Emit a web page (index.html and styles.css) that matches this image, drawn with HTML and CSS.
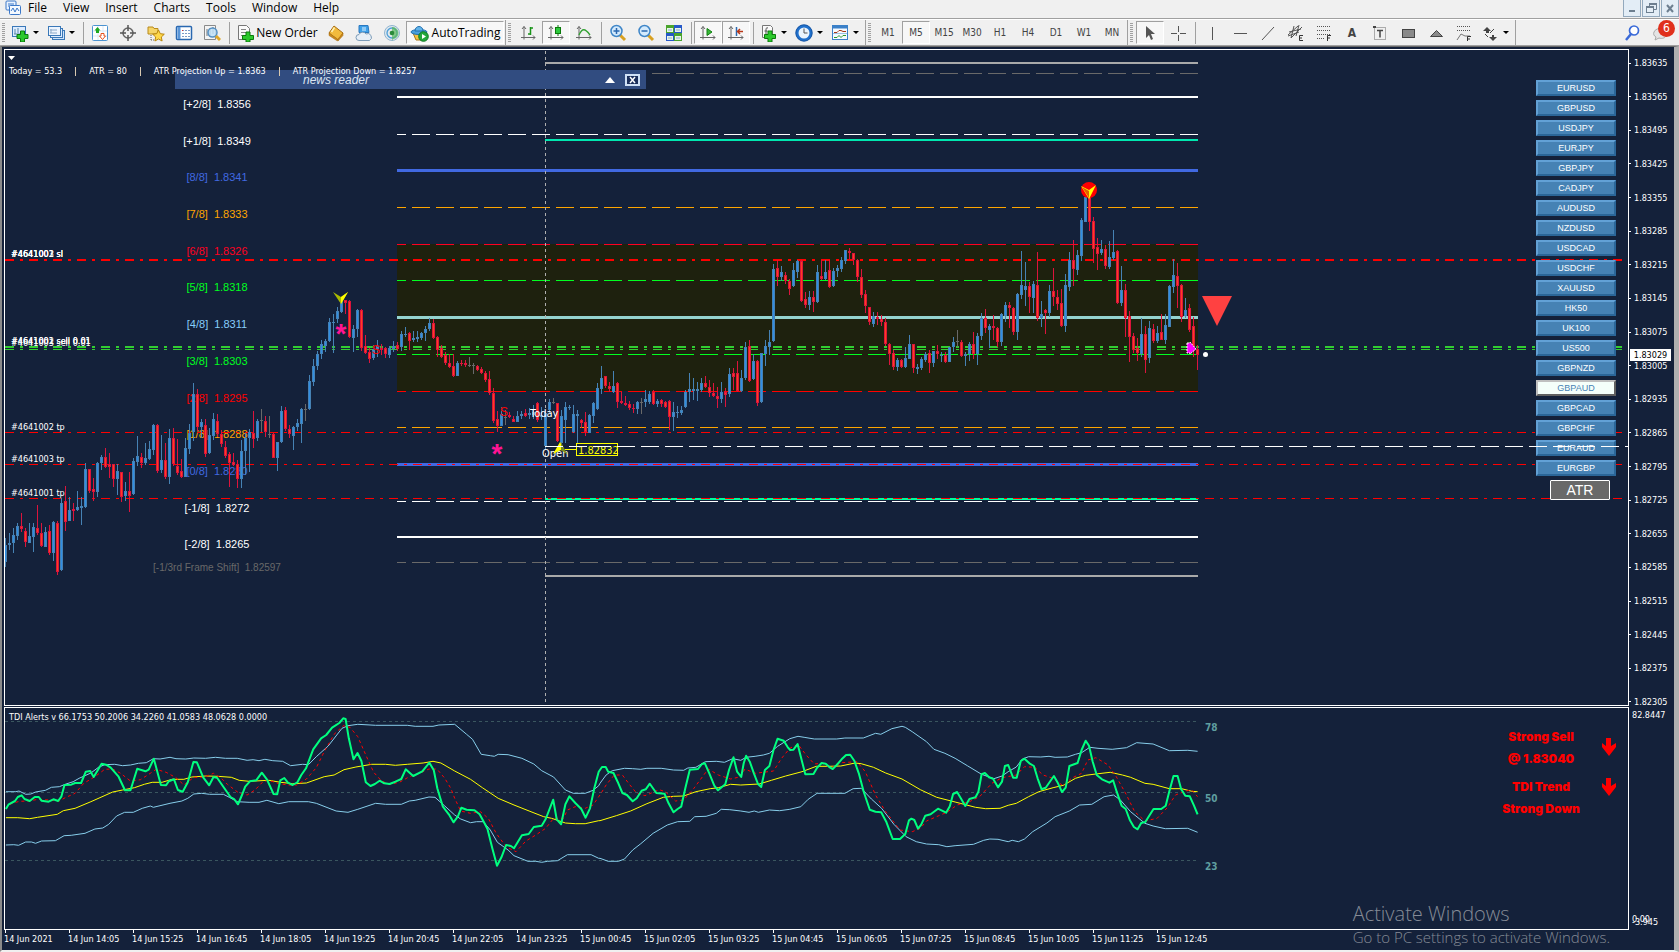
FILE: index.html
```html
<!DOCTYPE html>
<html lang="en">
<head>
    <meta charset="UTF-8">
    <meta name="viewport" content="width=device-width, initial-scale=1.0">
    <title>GBPAUD,M5</title>
    <link rel="stylesheet" href="styles.css">
</head>
<body>
    <!-- Menu -->
    <header class="menubar">
        <svg class="app-icon" width="16" height="15" viewBox="0 0 16 15"><rect x="1" y="1" width="10" height="9" rx="1" fill="#e8f2ff" stroke="#3c78c8"/><path d="M3 4h6M3 6h3" stroke="#3c78c8"/><rect x="4.500" y="5.500" width="11" height="9" rx="1" fill="#f4f9ff" stroke="#3c78c8"/><path d="M6 11l2-3 2 4 2-4 2 3" fill="none" stroke="#3c78c8"/></svg>
        <nav class="menu">
            <button>File</button>
            <button>View</button>
            <button>Insert</button>
            <button>Charts</button>
            <button>Tools</button>
            <button>Window</button>
            <button>Help</button>
        </nav>
        <div class="window-buttons">
            <button aria-label="Minimize"><svg width="16" height="14"><path d="M5 10h6" stroke="#6d7f90" stroke-width="2"/></svg></button>
            <button aria-label="Restore"><svg width="16" height="14"><path d="M6.500 5V2.500h7v6H11" fill="none" stroke="#6d7f90"/><path d="M6 3h8" stroke="#6d7f90" stroke-width="2"/><rect x="3.500" y="5.500" width="7" height="6" fill="#e6eff7" stroke="#6d7f90"/><path d="M3 6h8" stroke="#6d7f90" stroke-width="2"/></svg></button>
            <button aria-label="Close"><svg width="16" height="14"><path d="M5 4l6 7M11 4l-6 7" stroke="#6d7f90" stroke-width="2"/></svg></button>
        </div>
    </header>

    <!-- Toolbars -->
    <div class="toolbar">
        <div class="group">
            <span class="grip"></span>
            <button class="tool drop" aria-label="New chart"><svg width="18" height="18"><rect x="1.500" y="2.500" width="13" height="10" fill="#dcecff" stroke="#3a78b8"/><path d="M4 5v5M7 4v5M3 10h8" stroke="#5a88a8"/><path d="M9.500 7h4v3.500H17v4h-3.500V18h-4v-3.500H6v-4h3.500z" fill="#2cc82c" stroke="#0b7a0b"/></svg></button>
            <button class="tool drop" aria-label="Profiles"><svg width="18" height="18"><rect x="5.500" y="6.500" width="12" height="9" fill="#cfe3fa" stroke="#3a78b8"/><rect x="3.500" y="4.500" width="12" height="9" fill="#dcecff" stroke="#3a78b8"/><rect x="1.500" y="2.500" width="12" height="9" fill="#edf5ff" stroke="#3a78b8"/><path d="M4 5v4M3 9h7M3 6h7" stroke="#8aa8c8"/></svg></button>
            <span class="sep"></span>
            <button class="tool" aria-label="Market Watch"><svg width="18" height="18"><rect x="1.500" y="1.500" width="15" height="15" rx="1" fill="#fff" stroke="#4b93d1"/><path d="M2 7h14M2 12h14M7 2v14M12 2v14" stroke="#dbe9f5"/><path d="M6.500 3l3 3.500H8v2.500H5V6.500H3.500z" fill="#1fa81f"/><path d="M11.500 15.500l-3-3.500H10V9.500h3V12h1.500z" fill="#fff" stroke="#e8531f"/></svg></button>
            <button class="tool" aria-label="Data Window"><svg width="18" height="18"><circle cx="9" cy="9" r="5" fill="none" stroke="#666" stroke-width="1.500"/><path d="M9 1v6M9 11v6M1 9h6M11 9h6" stroke="#555" stroke-width="1.500"/></svg></button>
            <button class="tool" aria-label="Navigator"><svg width="18" height="18"><path d="M1 3h5l1 1.500h4V10H1z" fill="#f6d568" stroke="#b88a1c"/><path d="M4 11v6M4 16h4" stroke="#666" stroke-dasharray="1 1"/><path d="M11.500 6l1.800 3.700 4 .5-3 2.800.8 4-3.600-2-3.600 2 .8-4-3-2.800 4-.5z" fill="#ffd84a" stroke="#b8860b"/></svg></button>
            <button class="tool" aria-label="Terminal"><svg width="18" height="18"><rect x="1.500" y="2.500" width="15" height="13" rx="1" fill="#fff" stroke="#2a68b0" stroke-width="1.500"/><path d="M4 3v12" stroke="#5a96d8" stroke-width="3"/><path d="M7 6.500h8M7 9.500h8M7 12.500h8" stroke="#7a9cc8" stroke-dasharray="2 1"/><path d="M7 6.500h1" stroke="#e03030"/></svg></button>
            <button class="tool" aria-label="Strategy Tester"><svg width="18" height="18"><path d="M1.500 1.500h11v14h-11z" fill="#f4f4f4" stroke="#8a8a8a"/><path d="M4 12V5M7 13V4M10 10V3" stroke="#777"/><circle cx="9.500" cy="8.500" r="4.500" fill="#bfe0f8" fill-opacity=".85" stroke="#5591c4" stroke-width="1.500"/><path d="M13 12l4 4" stroke="#e0a828" stroke-width="3"/></svg></button>
            <span class="sep"></span>
            <button class="tool wide"><svg width="18" height="18"><path d="M2.500 1.500h8l3 3v11h-11z" fill="#fafafa" stroke="#777"/><path d="M5 5.500h5M5 8.500h6M5 11.500h3" stroke="#888"/><path d="M10 8h4v3.500h3.500v4H14V18h-4v-2.500H6.500v-4H10z" fill="#2cc82c" stroke="#0b7a0b"/></svg>New Order</button>
            <button class="tool" aria-label="MetaEditor"><svg width="18" height="18"><path d="M2 9l5-7 9 7-5 7z" fill="#f2bb3d" stroke="#a86d12"/><path d="M2 9v2.500l8.500 5.500V15zM16 9v2.500l-5 5.500v-2z" fill="#c98a1e" stroke="#a86d12" stroke-width=".5"/><path d="M4.500 8l3-4.500" stroke="#fff2b8" stroke-width="1.500"/></svg></button>
            <button class="tool" aria-label="Cloud"><svg width="18" height="18"><path d="M4 1.500h9l1 7H4z" fill="#3ea0e8" stroke="#2a78c0"/><path d="M7 4h4M7 6h4" stroke="#dff1ff"/><path d="M4 16.500a3 3 0 0 1 0-6 4 4 0 0 1 7-.5 3.300 3.300 0 0 1 3.500 6.500z" fill="#e6eef6" stroke="#7d9cb8"/></svg></button>
            <button class="tool" aria-label="Signals"><svg width="18" height="18"><circle cx="9" cy="9" r="7.500" fill="#e2e8ee" stroke="#8fb4d0"/><circle cx="9" cy="9" r="5" fill="none" stroke="#4c9fd8" stroke-width="1.300"/><path d="M9 3a6 6 0 0 1 1 12l-1 2z" fill="#58b858" fill-opacity=".7"/><circle cx="9" cy="9" r="2.300" fill="#2a8a3a"/></svg></button>
            <button class="tool auto pressed"><svg width="20" height="18"><path d="M3 9h12l-2 7H6z" fill="#f5c242" stroke="#a87618"/><ellipse cx="9" cy="8" rx="8" ry="2.500" fill="#4aa0dc" stroke="#2070b0"/><path d="M5 7c0-6 8-6 8 0z" fill="#62b4ea" stroke="#2070b0"/><circle cx="13.500" cy="12.500" r="4.800" fill="#22a83c" stroke="#0e7a22"/><path d="M12 10v5l4-2.500z" fill="#fff"/></svg>AutoTrading</button>
        </div>
        <div class="group">
            <span class="grip"></span>
            <button class="tool" aria-label="Bar Chart"><svg width="18" height="18"><path d="M5 2.500v13M3 5l2-2.500L7 5M2 13.500h14M14 11.500l2 2-2 2" fill="none" stroke="#666"/><path d="M11.500 3v8M9 10h2M12 4h2" stroke="#189418" stroke-width="1.500"/></svg></button>
            <button class="tool pressed" aria-label="Candlesticks"><svg width="18" height="18"><path d="M4 2.500v13M2 5l2-2.500L6 5M1 13.500h15M14 11.500l2 2-2 2" fill="none" stroke="#666"/><path d="M11 1v11" stroke="#0b7a0b"/><rect x="8.500" y="3.500" width="5" height="6" fill="#2cc83c" stroke="#0b7a0b"/></svg></button>
            <button class="tool" aria-label="Line Chart"><svg width="18" height="18"><path d="M4 2.500v13M2 5l2-2.500L6 5M1 13.500h15M14 11.500l2 2-2 2" fill="none" stroke="#666"/><path d="M4 11c3-7 6-7 11 0" fill="none" stroke="#30a030" stroke-width="1.300"/></svg></button>
            <span class="sep"></span>
            <button class="tool" aria-label="Zoom In"><svg width="18" height="18"><path d="M11 11l5 5" stroke="#d8a020" stroke-width="3"/><circle cx="7.500" cy="7" r="5.500" fill="#d4eafc" stroke="#3f86c8" stroke-width="1.500"/><path d="M4.500 7h6M7.500 4v6" stroke="#2a68b0" stroke-width="1.500"/></svg></button>
            <button class="tool" aria-label="Zoom Out"><svg width="18" height="18"><path d="M11 11l5 5" stroke="#d8a020" stroke-width="3"/><circle cx="7.500" cy="7" r="5.500" fill="#d4eafc" stroke="#3f86c8" stroke-width="1.500"/><path d="M4.500 7h6" stroke="#2a68b0" stroke-width="1.500"/></svg></button>
            <button class="tool" aria-label="Tile Windows"><svg width="18" height="18"><path fill="#49a42c" d="M1 1h8v8H1zM9 9h8v8H9z"/><path fill="#2558c8" d="M9 1h8v8H9zM1 9h8v8H1z"/><path fill="#e8f4e8" d="M2 4h6v4H2zM10 4h6v4h-6zM2 12h6v4H2zM10 12h6v4h-6z"/><path d="M3 6h4M11 6h4M3 14h4M11 14h4" stroke="#8ab0d0"/></svg></button>
            <span class="sep"></span>
            <button class="tool pressed" aria-label="Auto Scroll"><svg width="18" height="18"><path d="M4 2.500v13M2 5l2-2.500L6 5M1 13.500h15M14 11.500l2 2-2 2" fill="none" stroke="#666"/><path d="M8 4.500v7l5-3.500z" fill="#38b838" stroke="#128012"/></svg></button>
            <button class="tool pressed" aria-label="Chart Shift"><svg width="18" height="18"><path d="M4 2.500v13M2 5l2-2.500L6 5M1 13.500h15M14 11.500l2 2-2 2" fill="none" stroke="#666"/><path d="M9.500 3v9" stroke="#2a68b0" stroke-width="1.500"/><path d="M16 7.500h-5M13 5l-2.500 2.500L13 10" fill="none" stroke="#b83818" stroke-width="1.500"/></svg></button>
            <span class="sep"></span>
            <button class="tool drop" aria-label="Indicators"><svg width="18" height="18"><path d="M3.500 1.500h8l2 2v10h-10z" fill="#fafafa" stroke="#777"/><path d="M9 4c-2-1-2 1-2 2v5M5.500 7h3" fill="none" stroke="#555"/><path d="M9 7h4v3.500h3.500v4H13V18H9v-3.500H5.500v-4H9z" fill="#2cc82c" stroke="#0b7a0b"/></svg></button>
            <button class="tool drop" aria-label="Periods"><svg width="18" height="18"><circle cx="9" cy="9" r="7" fill="#eaf4fd" stroke="#2070cc" stroke-width="3"/><circle cx="9" cy="9" r="8.200" fill="none" stroke="#124a94" stroke-width=".7"/><path d="M9 4.500V9h3.500" fill="none" stroke="#555"/></svg></button>
            <button class="tool drop" aria-label="Templates"><svg width="18" height="18"><rect x="1.500" y="1.500" width="15" height="14" fill="#f5faff" stroke="#3a80c8"/><path d="M1 3h16" stroke="#3a80c8" stroke-width="3"/><path d="M3 8.500h3l2-2h2l2 1h3" fill="none" stroke="#a83818"/><path d="M2 9.500h14" stroke="#9bc0e0"/><path d="M3 13.500h3l2-2 2 2 2-2h3" fill="none" stroke="#2a982a"/></svg></button>
        </div>
        <div class="group periods">
            <span class="grip"></span>
            <button class="tool">M1</button>
            <button class="tool pressed">M5</button>
            <button class="tool">M15</button>
            <button class="tool">M30</button>
            <button class="tool">H1</button>
            <button class="tool">H4</button>
            <button class="tool">D1</button>
            <button class="tool">W1</button>
            <button class="tool">MN</button>
        </div>
        <div class="group">
            <span class="grip"></span>
            <button class="tool pressed" aria-label="Cursor"><svg width="18" height="18"><path d="M5 2v12l3-3 2 5 2-1-2-5h4z" fill="#555"/></svg></button>
            <button class="tool" aria-label="Crosshair"><svg width="18" height="18"><path d="M9.500 2v6M9.500 11v6M2 9.500h6M11 9.500h6" stroke="#555"/></svg></button>
            <span class="sep"></span>
            <button class="tool" aria-label="Vertical Line"><svg width="18" height="18"><path d="M9.500 3v13" stroke="#555"/></svg></button>
            <button class="tool" aria-label="Horizontal Line"><svg width="18" height="18"><path d="M3 9.500h13" stroke="#555"/></svg></button>
            <button class="tool" aria-label="Trendline"><svg width="18" height="18"><path d="M3 16L15 3" stroke="#555"/></svg></button>
            <button class="tool" aria-label="Equidistant Channel"><svg width="18" height="18"><path d="M1 11L11 2M4 14L15 3M2 8l12-3M1 12l11-4M7 2L4 14M12 1L9 12" stroke="#555"/><path d="M16 11.500h-3.500v5H16M12.500 14H15" fill="none" stroke="#333"/></svg></button>
            <button class="tool" aria-label="Fibonacci"><svg width="18" height="18"><path d="M2 2.500h13M2 6.500h13M2 10.500h13M2 14.500h8" stroke="#555" stroke-dasharray="1 1"/><path d="M16 11.500h-3.500V17M12.500 14H15" fill="none" stroke="#333"/></svg></button>
            <button class="tool letter" aria-label="Text">A</button>
            <button class="tool" aria-label="Text Label"><svg width="18" height="18"><rect x="3.500" y="3.500" width="11" height="12" fill="none" stroke="#666" stroke-dasharray="1 1"/><path d="M6 6.500h6M9 6v7.500" stroke="#444" stroke-width="1.500"/><path d="M2 2h3v2H2z" fill="#444"/></svg></button>
            <button class="tool" aria-label="Rectangle"><svg width="18" height="18"><rect x="3.500" y="5.500" width="12" height="8" fill="#8a8a8a" stroke="#444"/></svg></button>
            <button class="tool" aria-label="Triangle"><svg width="18" height="18"><path d="M3.500 12.500h12l-6-6z" fill="#8a8a8a" stroke="#444"/></svg></button>
            <button class="tool" aria-label="Fibonacci Fan"><svg width="18" height="18"><path d="M2 2.500h14M2 6.500h14" stroke="#555" stroke-dasharray="1 1"/><path d="M2 16l4-6 4 2h5" fill="none" stroke="#777"/><path d="M16 12.500h-3.500V17M12.500 15H15" fill="none" stroke="#333"/></svg></button>
            <button class="tool drop" aria-label="Arrows"><svg width="18" height="18"><path d="M2 7l4-4 4 4H8v2H5V7zM8 13h3v-2h2v2h3l-4 4z" fill="#444"/><path d="M4 10l3 3M13 5l-4 4" stroke="#444"/></svg></button>
        </div>
        <div class="tray">
            <button class="tool" aria-label="Search"><svg width="18" height="18"><path d="M7 10l-5 6" stroke="#3a6ad8" stroke-width="2.500"/><circle cx="10" cy="6.500" r="4.500" fill="#fff" stroke="#3a6ad8" stroke-width="1.700"/></svg></button>
            <button class="tool chat" aria-label="Notifications"><svg width="18" height="18"><path d="M2 8a5 4 0 0 1 12 3c0 3-4 4-7 3l-4 2 1-3C2 12 1 10 2 8z" fill="#e4e4e4" stroke="#aaa"/></svg><span class="badge">6</span></button>
        </div>
    </div>

    <!-- Chart window -->
    <main class="workspace">
        <section class="panel price-panel">
            <svg class="plot" id="price"></svg>
            <svg class="panel-mark" width="8" height="5"><path d="M0 0h7l-3.500 4z" fill="#fff"/></svg>
            <div class="news">
                <span class="news-title">news reader</span>
                <button class="news-btn" aria-label="Collapse"><svg width="10" height="6"><path d="M0 6l5-6 5 6z" fill="#fff"/></svg></button>
                <button class="news-btn" aria-label="Close news"><svg width="15" height="12"><rect x="1" y="1" width="13" height="10" fill="#1b2f5c" stroke="#cfe0f5" stroke-width="2"/><path d="M5 3l5 6M10 3L5 9" stroke="#fff" stroke-width="1.500"/></svg></button>
            </div>
            <p class="atr-line"><span>Today = 53.3</span><i></i><span>ATR = 80</span><i></i><span>ATR Projection Up = 1.8363</span><i></i><span>ATR Projection Down = 1.8257</span></p>
            <div class="symbols" id="symbols"></div>
            <div class="open-line"></div>
        </section>
        <div class="scale" id="scale"></div>

        <section class="panel tdi-panel">
            <svg class="plot" id="tdi"></svg>
            <p class="tdi-line">TDI Alerts v 66.1753 50.2006 34.2260 41.0583 48.0628 0.0000</p>
            <div class="signals">
                <div class="signal">
                    <p>Strong Sell<br>@ 1.83040</p>
                    <svg width="16" height="18"><path d="M5 0h5v8l5-3v4l-7 9-7-9V5l4 3z" fill="#f00"/></svg>
                </div>
                <div class="signal">
                    <p>TDI Trend<br>Strong Down</p>
                    <svg width="16" height="18"><path d="M5 0h5v8l5-3v4l-7 9-7-9V5l4 3z" fill="#f00"/></svg>
                </div>
            </div>
        </section>
        <div class="tdi-scale">
            <span>82.8447</span>
            <span class="zero">0.00</span>
            <span class="low">-3.945</span>
        </div>

        <div class="times" id="times"></div>
        <div class="watermark">
            <p class="big">Activate Windows</p>
            <p>Go to PC settings to activate Windows.</p>
        </div>
    </main>

    <script src="chart.js"></script>
</body>
</html>
```

FILE: styles.css
```css
* {
    box-sizing: border-box;
}
body {
    margin: 0;
    height: 100vh;
    display: flex;
    flex-direction: column;
    overflow: hidden;
    background: #f0f0f0;
    color: #000;
    font-family: "DejaVu Sans Condensed", "DejaVu Sans", sans-serif;
    font-size: 9px;
}
p {
    margin: 0;
}
button {
    margin: 0;
    padding: 0;
    border: 0;
    background: none;
    color: inherit;
    font: inherit;
}

/* Menu */
.menubar {
    flex: none;
    display: flex;
    align-items: flex-start;
    height: 19px;
    padding-left: 5px;
    border-bottom: 1px solid #a0a0a0;
    font-family: "Open Sans", "Noto Sans", sans-serif;
    font-size: 12px;
    line-height: 16px;
}
.menu {
    flex: 1;
    display: flex;
    gap: 16px;
    margin-left: 7px;
}
.window-buttons {
    display: flex;
    gap: 1px;
}
.window-buttons button {
    width: 18px;
    height: 17px;
    border: 1px solid #93a9bd;
    border-top: 0;
    background: #e3edf6;
}
.window-buttons svg {
    display: block;
}

/* Toolbars */
.toolbar {
    flex: none;
    display: flex;
    height: 27px;
    border-top: 1px solid #fff;
    border-bottom: 1px solid #a0a0a0;
}
.group {
    display: flex;
    align-items: center;
    padding-right: 1px;
    border-right: 1px solid #a0a0a0;
}
.grip {
    width: 3px;
    height: 20px;
    margin: 0 3px 0 2px;
    background: repeating-linear-gradient(#a0a0a0 0 1px, #f0f0f0 1px 2px);
}
.sep {
    width: 1px;
    height: 22px;
    margin: 0 2px 0 3px;
    background: #a0a0a0;
}
.tool {
    display: flex;
    align-items: center;
    justify-content: center;
    width: 28px;
    height: 23px;
}
.drop {
    justify-content: flex-start;
    width: 36px;
    padding-left: 3px;
}
.drop::after {
    content: "";
    margin-left: 4px;
    border: 3px solid transparent;
    border-top-color: #000;
    border-bottom: 0;
}
.wide, .auto {
    font-family: "Open Sans", "Noto Sans", sans-serif;
    font-size: 12px;
    white-space: nowrap;
}
.wide {
    gap: 2px;
    width: 90px;
}
.auto {
    gap: 2px;
    width: 98px;
}
.pressed {
    border: 1px solid #fff;
    border-top-color: #a0a0a0;
    border-left-color: #a0a0a0;
    background: #f7f7f7;
}
.periods {
    color: #444;
    font-size: 10px;
}
.letter {
    color: #444;
    font-size: 12px;
    font-weight: bold;
}
.tray {
    display: flex;
    align-items: center;
    margin-left: auto;
}
.chat {
    position: relative;
    margin-right: 4px;
}
.badge {
    position: absolute;
    top: -1px;
    right: 0;
    width: 17px;
    height: 17px;
    border-radius: 50%;
    background: #e0301c;
    color: #fff;
    font-size: 12px;
    line-height: 17px;
    text-align: center;
}

/* Chart window */
.workspace {
    flex: 1;
    min-height: 0;
    position: relative;
    display: grid;
    grid-template-columns: minmax(0, 1fr) 45px;
    grid-template-rows: minmax(0, 657fr) minmax(0, 224fr) 20px;
    padding: 2px 0 0 2px;
    border: 2px solid #f0f0f0;
    border-top: 1px solid #696969;
    border-left-color: #8a8a8a;
    border-right: 5px solid #b0b0b0;
    background: #14213a;
    color: #fff;
}
.panel {
    position: relative;
    border: 1px solid #fff;
    overflow: hidden;
}
.tdi-panel {
    margin-top: 1px;
}
.plot {
    display: block;
    width: 100%;
    height: 100%;
    font-family: "DejaVu Sans Condensed", "DejaVu Sans", sans-serif;
}
.panel-mark {
    position: absolute;
    top: 6px;
    left: 3px;
}
.atr-line, .tdi-line {
    position: absolute;
    left: 4px;
    line-height: 12px;
    white-space: pre;
}
.atr-line {
    top: 15px;
    display: flex;
    align-items: center;
    gap: 13px;
}
.atr-line i {
    width: 1px;
    height: 9px;
    background: #d8c8b0;
}
.tdi-line {
    top: 3px;
}

/* News bar lies over the plot */
.news {
    position: absolute;
    top: 20px;
    left: 170px;
    display: flex;
    align-items: center;
    gap: 10px;
    width: 471px;
    height: 19px;
    padding-right: 6px;
    background: #314c80;
}
.news-title {
    flex: 1;
    padding-left: 128px;
    color: #dce4f0;
    font: italic 12px "Liberation Sans", Arial, sans-serif;
}
.news-btn svg {
    display: block;
}

/* Symbol buttons */
.symbols {
    position: absolute;
    top: 30px;
    right: 12px;
    display: flex;
    flex-direction: column;
    gap: 4px;
    width: 80px;
}
.symbol {
    height: 16px;
    border: 2px solid;
    border-color: #62a1d6 #2b6698 #2b6698 #62a1d6;
    background: #4682b4;
    color: #fff;
    font: 9px/12px "Liberation Sans", Arial, sans-serif;
}
.symbol.current {
    border-color: #c0c0c0 #606060 #606060 #c0c0c0;
    background: #f5fffa;
    color: #4682b4;
}
.atr-btn {
    align-self: flex-end;
    width: 60px;
    height: 20px;
    margin-right: 6px;
    border: 1px solid #fff;
    border-radius: 1px;
    background: #696969;
    color: #fff;
    font: 14px/18px "Liberation Sans", Arial, sans-serif;
}
.open-line {
    position: absolute;
    top: 396px;
    left: 540px;
    right: 0;
    height: 1px;
    background: repeating-linear-gradient(90deg, #fff 0 18px, transparent 18px 24px);
    pointer-events: none;
}

/* Axes */
.scale {
    position: relative;
    display: flex;
    flex-direction: column;
    justify-content: space-between;
    padding-top: 8px;
    margin-bottom: -2px;
    line-height: 12px;
}
.scale span {
    display: flex;
    align-items: center;
    gap: 3px;
}
.scale span::before {
    content: "";
    width: 2px;
    height: 1px;
    background: #fff;
}
.bid {
    position: absolute;
    top: 300px;
    left: 1px;
    width: 41px;
    background: #fff;
    color: #000;
    text-align: center;
}
.tdi-scale {
    position: relative;
    padding: 3px 0 0 3px;
    line-height: 12px;
}
.tdi-scale .zero, .tdi-scale .low {
    position: absolute;
    left: 3px;
    bottom: 5px;
}
.tdi-scale .low {
    bottom: 2px;
}
.times {
    grid-column: 1 / 3;
    display: flex;
    line-height: 12px;
}
.times span {
    flex: none;
    width: 64px;
    white-space: nowrap;
}
.times span::before {
    content: "";
    display: block;
    width: 1px;
    height: 3px;
    margin-left: 1px;
    background: #fff;
}

/* Signals */
.signals {
    position: absolute;
    top: 18px;
    right: 11px;
    display: flex;
    flex-direction: column;
    gap: 6px;
    color: #f00;
    font: 900 12px/22px Inter, "Open Sans", sans-serif;
    text-align: center;
}
.signal {
    display: flex;
    justify-content: flex-end;
    gap: 18px;
}
.signal p {
    width: 84px;
    white-space: nowrap;
}
.signal svg {
    margin-top: 12px;
}
.signal + .signal svg {
    margin-top: 2px;
}
.watermark {
    position: absolute;
    right: 64px;
    bottom: 2px;
    color: #858b96;
    font: 15px/22px "Open Sans", "Noto Sans", sans-serif;
    font-weight: 300;
    white-space: nowrap;
}
.watermark .big {
    font-size: 20px;
    line-height: 24px;
}

/* Text inside the plots */
.murrey {
    font: 11px "Liberation Sans", Arial, sans-serif;
    text-anchor: middle;
    white-space: pre;
}
.murrey.small {
    font-size: 10px;
}
.order {
    fill: #fff;
    font-size: 9px;
}
.note {
    fill: #fff;
    font-size: 11px;
}
.note.yellow {
    fill: #ff0;
}
.mark {
    fill: #f00;
    font: 12px "Liberation Sans", Arial, sans-serif;
}
.star {
    fill: #ff1493;
    font: bold 28px "Liberation Sans", Arial, sans-serif;
    text-anchor: middle;
}
.tdi-level {
    fill: #5f9ea0;
    font-size: 10px;
    font-weight: bold;
}
```

FILE: chart.js
```javascript
// bars 4px apart: colour, high, body top, body bottom, low
const candles = `
b 538 545 562 567,b 533 543 545 550,b 528 535 543 553,b 523 526 536 540,r 513 526 529 532,r 528 531 542 547,
b 523 536 543 543,b 523 527 537 552,r 505 528 533 535,r 523 533 546 547,b 527 532 547 547,r 525 531 553 555,
b 521 522 553 561,r 521 523 572 575,b 498 503 570 571,r 486 501 522 531,b 497 510 521 521,r 503 509 511 521,
b 491 507 510 511,b 497 506 508 525,b 463 469 507 508,r 469 469 491 493,r 478 489 492 501,b 462 463 492 497,
b 455 457 463 470,r 448 457 467 468,r 453 464 467 478,r 464 464 479 487,b 464 471 479 495,r 472 472 497 502,
b 482 491 496 501,r 472 491 496 512,b 458 461 494 495,b 436 456 462 466,r 453 457 463 468,b 443 458 463 465,
b 441 449 459 460,b 424 425 450 455,r 424 425 471 473,b 435 460 470 473,r 443 460 477 479,b 429 438 477 484,
r 428 438 464 466,r 439 466 473 475,r 459 471 477 478,b 438 448 477 477,b 424 433 449 454,b 383 394 432 441,
r 389 394 427 431,b 419 422 427 438,r 419 425 454 457,b 428 435 453 454,b 413 419 436 440,r 414 421 434 437,
r 430 434 444 447,r 441 447 456 458,r 452 454 463 487,r 453 462 465 466,r 460 464 479 488,b 440 451 479 488,
b 433 438 451 475,b 429 432 438 472,r 411 433 439 448,b 419 421 438 441,g 409 420 421 432,r 416 421 432 437,
g 416 434 435 438,r 433 434 458 458,b 442 442 458 471,b 406 411 442 443,r 407 410 429 431,r 425 429 434 438,
b 426 427 436 450,b 419 423 427 431,b 408 409 424 443,g 404 409 410 421,b 375 381 409 410,b 359 366 382 386,
b 351 354 366 370,b 340 344 354 359,b 339 341 346 352,b 318 322 341 342,b 314 322 323 353,b 307 311 319 323,
b 298 301 312 313,r 300 300 303 314,r 300 301 337 338,b 325 329 338 352,b 309 310 329 337,r 309 310 348 351,
r 335 346 353 354,r 348 352 359 363,b 345 349 358 360,b 340 346 349 357,r 344 348 350 355,r 347 348 354 358,
b 346 348 355 358,b 341 346 349 352,r 342 345 349 351,b 331 334 347 351,b 327 334 335 337,r 332 333 341 350,
b 331 338 340 342,b 331 337 339 342,b 332 333 338 340,b 326 329 333 341,b 318 323 329 331,r 319 323 338 339,
r 336 337 350 357,r 345 348 357 358,r 352 355 363 365,r 354 363 367 368,r 354 366 376 377,b 361 363 376 376,
r 360 363 364 366,r 360 363 365 367,g 357 365 366 367,g 363 365 366 374,r 365 366 370 371,r 367 369 373 374,
r 371 373 380 382,r 371 379 393 395,r 388 393 421 423,r 411 419 426 432,b 407 414 426 426,g 410 417 418 425,
r 412 415 417 418,r 416 419 422 422,b 411 416 422 422,b 411 414 416 419,r 409 413 416 417,b 408 413 415 419,
b 405 412 415 419,r 402 403 420 422,b 407 415 417 420,b 410 413 446 450,b 399 402 410 413,g 398 402 403 404,
r 403 403 441 442,b 410 416 443 447,b 402 407 420 443,b 405 407 408 410,b 405 414 432 433,b 410 414 416 447,
r 419 420 423 428,r 412 422 432 436,b 414 415 433 433,b 402 403 416 423,b 383 388 409 410,b 366 378 389 394,
r 376 376 386 388,r 382 386 389 392,b 371 386 392 393,r 382 383 402 408,r 392 401 403 404,r 396 403 405 406,
r 401 404 408 410,r 404 408 409 413,b 401 402 409 414,g 398 402 403 414,b 390 399 402 407,b 391 394 402 404,
r 390 392 404 405,b 399 401 404 407,r 399 400 404 407,r 401 402 407 408,r 400 401 417 430,b 402 412 417 431,
b 406 412 413 418,b 406 410 413 415,b 390 392 407 408,b 373 389 392 402,b 378 389 391 400,b 382 389 391 401,
b 378 383 390 392,r 376 383 387 388,r 380 387 393 397,r 383 393 396 397,r 387 396 399 408,b 382 392 399 403,
r 388 392 395 407,b 368 374 394 397,r 368 373 377 390,r 361 373 391 392,b 370 378 391 392,b 342 347 378 380,
r 340 346 381 382,b 354 361 379 380,r 360 361 403 406,b 353 353 402 403,b 340 346 354 366,b 330 342 347 355,
b 264 269 341 342,r 260 268 277 286,b 266 272 277 281,r 272 275 281 284,r 279 281 289 295,b 263 270 286 287,
b 260 261 272 278,r 260 261 301 302,r 292 299 305 308,b 291 297 305 310,r 291 297 302 312,b 265 272 302 303,
r 260 276 279 280,b 260 272 279 280,r 260 270 287 288,b 268 271 286 287,b 265 268 271 277,b 257 260 269 272,
b 250 250 261 264,r 248 251 253 259,r 253 253 260 265,r 259 260 277 282,r 269 277 295 298,r 290 294 306 313,
r 307 307 322 325,b 312 316 324 327,r 312 317 319 325,r 315 319 322 326,r 318 322 344 346,r 343 344 354 365,
r 350 353 367 370,b 358 360 367 371,r 359 360 367 368,b 347 358 367 368,b 335 344 359 359,r 344 344 368 373,
b 364 367 369 374,b 357 359 368 370,b 352 354 360 362,r 350 353 363 373,b 351 351 363 367,r 345 351 354 359,
b 352 355 356 362,r 352 355 362 363,b 347 347 362 362,b 337 342 347 352,g 330 341 342 347,r 340 342 356 357,
b 352 354 356 366,b 342 344 354 361,r 332 344 354 359,b 333 336 354 365,b 313 318 336 340,r 309 318 328 333,
b 324 326 330 348,r 315 326 328 340,r 327 328 342 347,b 313 314 342 346,b 302 305 316 322,r 302 305 308 328,
r 307 308 332 335,b 293 294 332 340,b 251 285 295 299,b 262 286 290 306,r 282 286 297 313,b 281 284 298 313,
r 252 285 318 321,b 301 314 318 327,r 309 310 313 334,b 285 291 313 317,r 268 291 297 306,r 290 297 304 310,
r 289 303 326 327,b 274 285 326 332,b 252 260 287 291,r 240 260 269 286,b 250 255 270 275,b 218 220 256 261,
b 195 197 222 222,r 195 197 222 231,r 217 221 249 263,r 238 247 254 270,b 240 249 253 255,r 245 249 266 269,
b 241 257 267 269,b 230 252 258 260,r 250 251 303 304,b 266 290 303 306,r 284 290 318 337,r 311 316 337 362,
r 333 336 350 353,r 338 348 353 361,b 318 334 354 357,r 326 334 360 373,b 321 328 358 363,r 324 329 341 343,
b 326 333 341 343,r 314 332 340 340,b 314 325 340 344,b 285 286 327 327,b 259 275 287 293,r 263 276 286 308,
r 284 285 317 322,b 298 310 316 318,r 304 308 330 332,r 317 326 350 357,r 345 349 355 370`;

const colors = { b: ['#4682b4', '#2f8de4'], r: ['#dc143c', '#ff4020'], g: ['#696969', '#696969'] };

// y is the top edge of the line
function line(x1, y, x2, color, width, dash, offset) {
    const extra = dash ? ` stroke-dasharray="${dash}" stroke-dashoffset="${offset || 0}"` : '';
    return `<path d="M${x1} ${y + width / 2}H${x2}" stroke="${color}" stroke-width="${width}"${extra}/>`;
}

// Price plot
let out = '<g transform="translate(-5 -50)" shape-rendering="crispEdges" fill="none">';
out += '<rect x="397" y="244" width="801" height="147" fill="#1e210e"/>';

// text, label y, colour, line y, width, dashed
const levels = [
    ['[+2/8]  1.8356', 108, '#fff', 96, 2, 0],
    ['[+1/8]  1.8349', 145, '#fff', 134, 1, 1],
    ['[8/8]  1.8341', 181, '#4169e1', 169, 3, 0],
    ['[7/8]  1.8333', 218, '#ffa500', 207, 1, 1],
    ['[6/8]  1.8326', 255, '#ff0020', 244, 1, 1],
    ['[5/8]  1.8318', 291, '#00ff20', 280, 1, 1],
    ['[4/8]  1.8311', 328, '#87cefa', 316, 3, 0],
    ['[3/8]  1.8303', 365, '#00ff20', 354, 1, 1],
    ['[2/8]  1.8295', 402, '#f00', 391, 1, 1],
    ['[1/8]  1.8288', 438, '#ffa500', 427, 1, 1],
    ['[0/8]  1.8280', 475, '#4169e1', 463, 3, 0],
    ['[-1/8]  1.8272', 512, '#fff', 501, 1, 1],
    ['[-2/8]  1.8265', 548, '#fff', 536, 2, 0],
    ['[-1/3rd Frame Shift]  1.82597', 571, '#696969', 562, 1, 1]
];
levels.forEach(l => {
    const size = l[0].includes('Frame') ? ' small' : '';
    out += `<text class="murrey${size}" x="217" y="${l[1]}" fill="${l[2]}">${l[0]}</text>`;
    const stroke = l[0].startsWith('[4/8]') ? '#94d3cf' : l[2];
    out += line(397, l[3], 1198, stroke, l[4], l[5] ? '18 6' : '', 9);
});
out += line(397, 73, 1198, '#696969', 1, '18 6', 9);
out += line(545, 62, 1198, '#a9a9a9', 2);
out += line(545, 575, 1198, '#a9a9a9', 2);
out += line(545, 139, 1198, '#00e8b0', 2);
out += line(545, 498, 1198, '#00fa9a', 2);

// orders
out += line(5, 259, 1622, '#f00', 2, '9 6 3 6');
out += line(5, 346, 1622, '#32cd32', 2, '9 6 3 6');
out += line(5, 349, 1622, '#32cd32', 1, '9 6 3 6');
[432, 464, 498].forEach(y => { out += line(5, y, 1622, '#f00', 1, '9 6 3 6'); });
out += '<path d="M545.5 51V705" stroke="#b0b0b0" stroke-dasharray="3 3"/>';

candles.trim().split(/,\s*/).forEach((bar, i) => {
    const [c, high, top, bottom, low] = bar.split(' ');
    const x = 5 + i * 4;
    const h = Math.max(1, bottom - top);
    out += `<rect x="${x}" y="${high}" width="1" height="${low - high}" fill="${colors[c][0]}"/>`;
    out += `<rect x="${x - 1}" y="${top}" width="3" height="${h}" fill="${colors[c][0]}"/>`;
    if (h > 2) {
        out += `<rect x="${x}" y="${+top + 1}" width="1" height="${h - 2}" fill="${colors[c][1]}"/>`;
    }
});
out += '</g><g transform="translate(-5 -50)">';

[['#4641001 sl', 257], ['#4641002 sl', 257], ['#4641003 sl', 257],
 ['#4641001 sell 0.01', 344], ['#4641002 sell 0.01', 344], ['#4641003 sell 0.01', 346],
 ['#4641002 tp', 430], ['#4641003 tp', 462], ['#4641001 tp', 496]].forEach(o => {
    out += `<text class="order" x="11" y="${o[1]}">${o[0]}</text>`;
});
out += `
<text class="mark" x="372" y="354">S</text><text class="mark" x="500" y="416">S</text>
<text class="star" x="341" y="343">*</text><text class="star" x="497" y="463">*</text>
<text class="note" x="530" y="417">Today</text><text class="note" x="542" y="457">Open</text>
<path d="M333 292l8 5 7-5-7 12z" fill="#aabb00"/><path d="M341 297l7-5-7 12z" fill="#ff0"/>
<path d="M553 454l7-12 7 12-6-4z" fill="#ff0"/><path d="M561 442l6 12-6-4z" fill="#7a8a20"/>
<path d="M565 449.500h11" stroke="#ff0"/><rect x="576.500" y="443.500" width="41" height="12" fill="#14213a" stroke="#ff0"/>
<text class="note yellow" x="578" y="454">1.82832</text>
<circle cx="1089" cy="190" r="8" fill="#f00"/><path d="M1081 186l8 4 7-5-7 14z" fill="#ff0"/><path d="M1082 187l7 4v7z" fill="#e06000"/>
<path d="M1202 296h30l-15 30z" fill="#ff4141"/>
<circle cx="1205.500" cy="354.500" r="2.500" fill="#fff"/>
<path d="M1187 343h3v-1l6 7-6 5v-1h-3z" fill="#f0f" stroke="#fff" stroke-dasharray="2 1"/></g>`;
document.getElementById('price').innerHTML = out;

// TDI plot: every series is two blocks of samples, [start x, samples per px, points]
function series(a, b, color, width, dash) {
    const pts = [[0, 2.529, a], [600, 2.45, b]].map(([x0, k, p]) =>
        p.split(' ').map(s => {
            const [x, y] = s.split(',');
            return (x0 + x / k).toFixed(1) + ',' + (695 + y / 3).toFixed(1);
        }).join(' ')).join(' ');
    return `<polyline points="${pts}" fill="none" stroke="${color}" stroke-width="${width}" stroke-linejoin="round"${dash ? ` stroke-dasharray="${dash}"` : ''}/>`;
}

out = '<g transform="translate(-5 -708)">';
[721, 792, 860].forEach(y => { out += line(5, y, 1198, '#3a565f', 1, '3 3'); });
out += series(
    '15,290 40,290 48,288 65,298 78,297 90,291 115,286 130,277 150,275 165,268 185,260 200,250 230,234 250,216 265,209 290,208 310,212 330,210 350,205 370,203 388,191 405,192 430,187 445,191 470,192 490,189 520,190 545,187 570,190 600,190 625,196 640,194 655,197 670,193 690,197 715,199 735,212 765,208 780,209 800,185 830,153 865,100 880,92 905,88 950,91 1030,91 1050,94 1095,94 1110,90 1150,88 1180,118 1195,133 1217,178 1240,182 1250,184 1260,178 1285,179 1320,190 1350,207 1370,227 1400,246 1430,285 1450,295 1480,295 1500,286 1514,272',
    '0,265 15,240 30,227 60,220 80,221 100,223 115,220 150,220 180,225 205,226 215,219 235,217 258,200 285,199 305,202 325,191 345,196 358,187 380,184 400,180 415,175 435,154 465,131 485,124 500,127 525,132 580,132 600,129 645,129 675,115 688,118 715,101 740,94 748,97 765,110 800,140 818,163 845,175 870,190 900,212 935,238 965,251 985,243 1000,230 1020,216 1035,192 1050,185 1080,186 1100,184 1115,187 1145,186 1165,178 1180,173 1200,157 1220,160 1255,163 1290,158 1315,143 1355,147 1395,167 1440,166 1464,169',
    '#87ceeb', 1);
out += series(
    '15,450 35,449 47,451 65,441 80,441 90,445 105,438 140,437 162,422 180,421 215,415 240,402 260,399 275,388 295,363 315,352 337,352 360,340 380,333 388,337 430,325 460,318 475,310 490,297 510,295 530,298 565,298 580,307 600,320 630,322 655,322 675,316 705,326 730,320 780,320 800,325 850,348 880,352 905,343 950,325 975,328 1015,328 1035,318 1050,316 1085,306 1100,307 1125,333 1150,360 1165,372 1190,383 1205,380 1222,380 1240,405 1258,442 1285,465 1300,482 1335,499 1355,499 1370,502 1385,499 1410,497 1435,479 1495,479 1514,490',
    '0,490 20,499 45,499 60,492 80,465 100,446 130,415 165,390 190,380 220,379 232,365 260,364 285,355 297,343 318,344 345,348 365,352 378,348 388,352 415,345 440,347 465,343 492,335 510,313 532,295 600,295 620,281 640,280 665,312 690,340 720,388 750,425 775,440 800,447 830,449 850,455 870,452 915,448 940,436 955,432 975,433 1000,440 1010,436 1025,440 1040,432 1060,410 1095,384 1115,365 1150,348 1175,330 1205,328 1235,305 1258,300 1275,315 1300,350 1335,385 1355,393 1385,401 1440,400 1464,412',
    '#87ceeb', 1);
out += series(
    '15,368 45,368 75,371 95,367 145,358 160,347 190,340 230,320 285,291 310,285 340,278 365,268 385,262 410,262 435,253 465,253 485,246 520,243 550,244 585,247 605,256 630,259 680,256 710,262 740,266 775,264 820,245 845,240 870,224 900,216 940,208 975,208 1000,211 1030,208 1070,204 1095,199 1115,204 1150,228 1190,253 1220,278 1260,310 1300,330 1340,349 1375,365 1395,370 1430,384 1455,386 1480,386 1514,377',
    '0,377 40,362 75,348 115,326 155,307 180,304 205,303 235,290 270,281 290,278 320,268 345,270 390,267 420,256 455,243 495,230 530,214 560,214 590,213 625,204 640,206 670,217 700,234 740,252 785,284 825,307 870,321 920,337 945,341 980,340 1000,331 1020,325 1050,305 1075,290 1110,278 1135,271 1165,250 1190,241 1215,237 1250,232 1280,240 1300,247 1335,265 1355,268 1395,281 1425,281 1450,289 1464,290',
    '#ff0', 1);
out += series(
    '15,342 30,325 50,319 75,318 95,313 125,315 150,318 165,308 190,295 212,265 240,245 265,223 285,222 305,235 330,258 355,254 380,235 395,223 420,232 445,248 465,270 490,247 515,247 540,235 560,250 575,268 605,295 625,300 645,285 665,260 680,256 705,266 730,270 750,270 775,252 800,218 820,170 845,118 868,92 885,97 905,125 925,180 945,232 965,258 985,268 1010,262 1035,245 1060,235 1085,222 1105,222 1125,250 1140,280 1150,310 1165,348 1190,355 1215,350 1235,370 1255,415 1280,455 1305,470 1330,438 1355,420 1380,400 1400,370 1425,370 1435,345 1455,335 1480,340 1500,330 1514,305',
    '0,300 15,270 35,240 55,240 70,265 90,295 110,302 145,284 160,290 185,318 205,315 230,280 265,222 290,240 320,252 345,245 355,222 380,235 400,232 425,228 445,190 465,160 485,148 505,180 525,207 545,205 565,220 590,203 630,200 650,230 675,300 700,350 735,405 765,410 785,400 800,378 830,362 850,352 875,330 905,320 930,305 960,265 985,248 1020,240 1040,215 1065,217 1085,240 1110,250 1135,273 1155,250 1180,235 1195,195 1215,188 1245,210 1265,245 1290,300 1310,350 1335,378 1365,370 1390,338 1410,300 1435,288 1450,285 1464,305',
    '#f00', 1, '3 3');
out += series(
    '15,342 22,328 38,318 45,306 55,301 62,312 75,318 88,306 98,306 105,317 123,320 135,313 147,318 155,305 163,270 180,269 190,264 205,264 217,230 228,228 237,246 257,206 268,209 280,218 300,245 316,286 330,286 347,221 368,229 376,224 389,191 407,270 420,271 427,259 440,253 450,285 462,290 475,262 489,201 498,202 514,247 529,271 540,246 549,248 570,284 583,306 592,312 602,328 612,300 620,275 632,259 648,256 662,233 675,253 692,297 701,298 709,256 719,249 728,263 740,270 752,262 762,240 774,220 792,163 812,130 825,120 840,98 858,84 868,70 874,72 882,130 894,193 904,174 914,198 925,262 937,273 948,267 960,257 972,265 985,267 1000,260 1015,252 1026,223 1045,243 1068,229 1086,203 1097,226 1106,280 1120,335 1135,358 1147,382 1158,364 1167,338 1180,344 1200,346 1213,358 1222,377 1233,402 1245,460 1257,512 1268,487 1280,450 1292,453 1300,460 1320,421 1337,417 1350,396 1370,392 1380,372 1399,314 1408,373 1419,388 1430,328 1440,304 1455,324 1470,342 1481,368 1492,340 1503,280 1514,230',
    '5,216 14,216 20,230 33,234 43,260 55,294 66,300 80,319 90,310 102,287 112,283 122,266 138,294 158,296 168,325 180,352 190,342 199,335 209,280 220,224 240,222 250,207 257,205 268,236 280,272 289,286 298,277 307,268 316,225 327,187 336,230 346,246 352,205 358,182 367,200 377,235 387,267 395,276 404,225 415,213 425,165 435,131 450,137 460,157 466,165 474,164 484,147 493,190 503,238 523,237 532,218 543,204 553,206 564,218 570,222 580,210 592,193 603,180 613,179 623,197 634,235 646,290 661,344 675,350 689,352 702,382 717,432 735,432 748,417 757,376 763,371 770,375 779,401 787,389 797,362 810,358 828,341 848,353 857,334 865,297 875,291 884,310 895,333 905,312 920,307 927,290 935,238 943,234 953,247 963,251 975,277 985,260 992,213 1000,210 1012,248 1021,248 1031,198 1040,191 1052,205 1063,213 1072,250 1082,283 1092,278 1112,243 1122,265 1132,291 1141,278 1150,213 1170,204 1180,165 1190,137 1198,152 1207,200 1217,240 1230,253 1248,263 1257,256 1266,290 1278,332 1288,342 1298,375 1308,396 1317,403 1326,384 1336,381 1356,342 1375,342 1386,332 1395,288 1405,243 1415,243 1424,283 1434,302 1445,304 1455,331 1464,358',
    '#00ff7f', 2);
[['78', 731], ['50', 802], ['23', 870]].forEach(l => {
    out += `<text class="tdi-level" x="1205" y="${l[1]}">${l[0]}</text>`;
});
document.getElementById('tdi').innerHTML = out + '</g>';

// Price axis
let scale = '';
for (let i = 0; i < 20; i++) {
    scale += `<span>${(1.83635 - i * 0.0007).toFixed(5)}</span>`;
}
document.getElementById('scale').innerHTML = scale + '<div class="bid">1.83029</div>';

const times = ['14 Jun 2021', '14 Jun 14:05', '14 Jun 15:25', '14 Jun 16:45', '14 Jun 18:05', '14 Jun 19:25', '14 Jun 20:45',
    '14 Jun 22:05', '14 Jun 23:25', '15 Jun 00:45', '15 Jun 02:05', '15 Jun 03:25', '15 Jun 04:45', '15 Jun 06:05',
    '15 Jun 07:25', '15 Jun 08:45', '15 Jun 10:05', '15 Jun 11:25', '15 Jun 12:45'];
document.getElementById('times').innerHTML = times.map(t => `<span>${t}</span>`).join('');

const symbols = ['EURUSD', 'GBPUSD', 'USDJPY', 'EURJPY', 'GBPJPY', 'CADJPY', 'AUDUSD', 'NZDUSD', 'USDCAD', 'USDCHF',
    'XAUUSD', 'HK50', 'UK100', 'US500', 'GBPNZD', 'GBPAUD', 'GBPCAD', 'GBPCHF', 'EURAUD', 'EURGBP'];
document.getElementById('symbols').innerHTML = symbols.map(s =>
    `<button class="symbol${s === 'GBPAUD' ? ' current' : ''}">${s}</button>`).join('') +
    '<button class="atr-btn">ATR</button>';
```
